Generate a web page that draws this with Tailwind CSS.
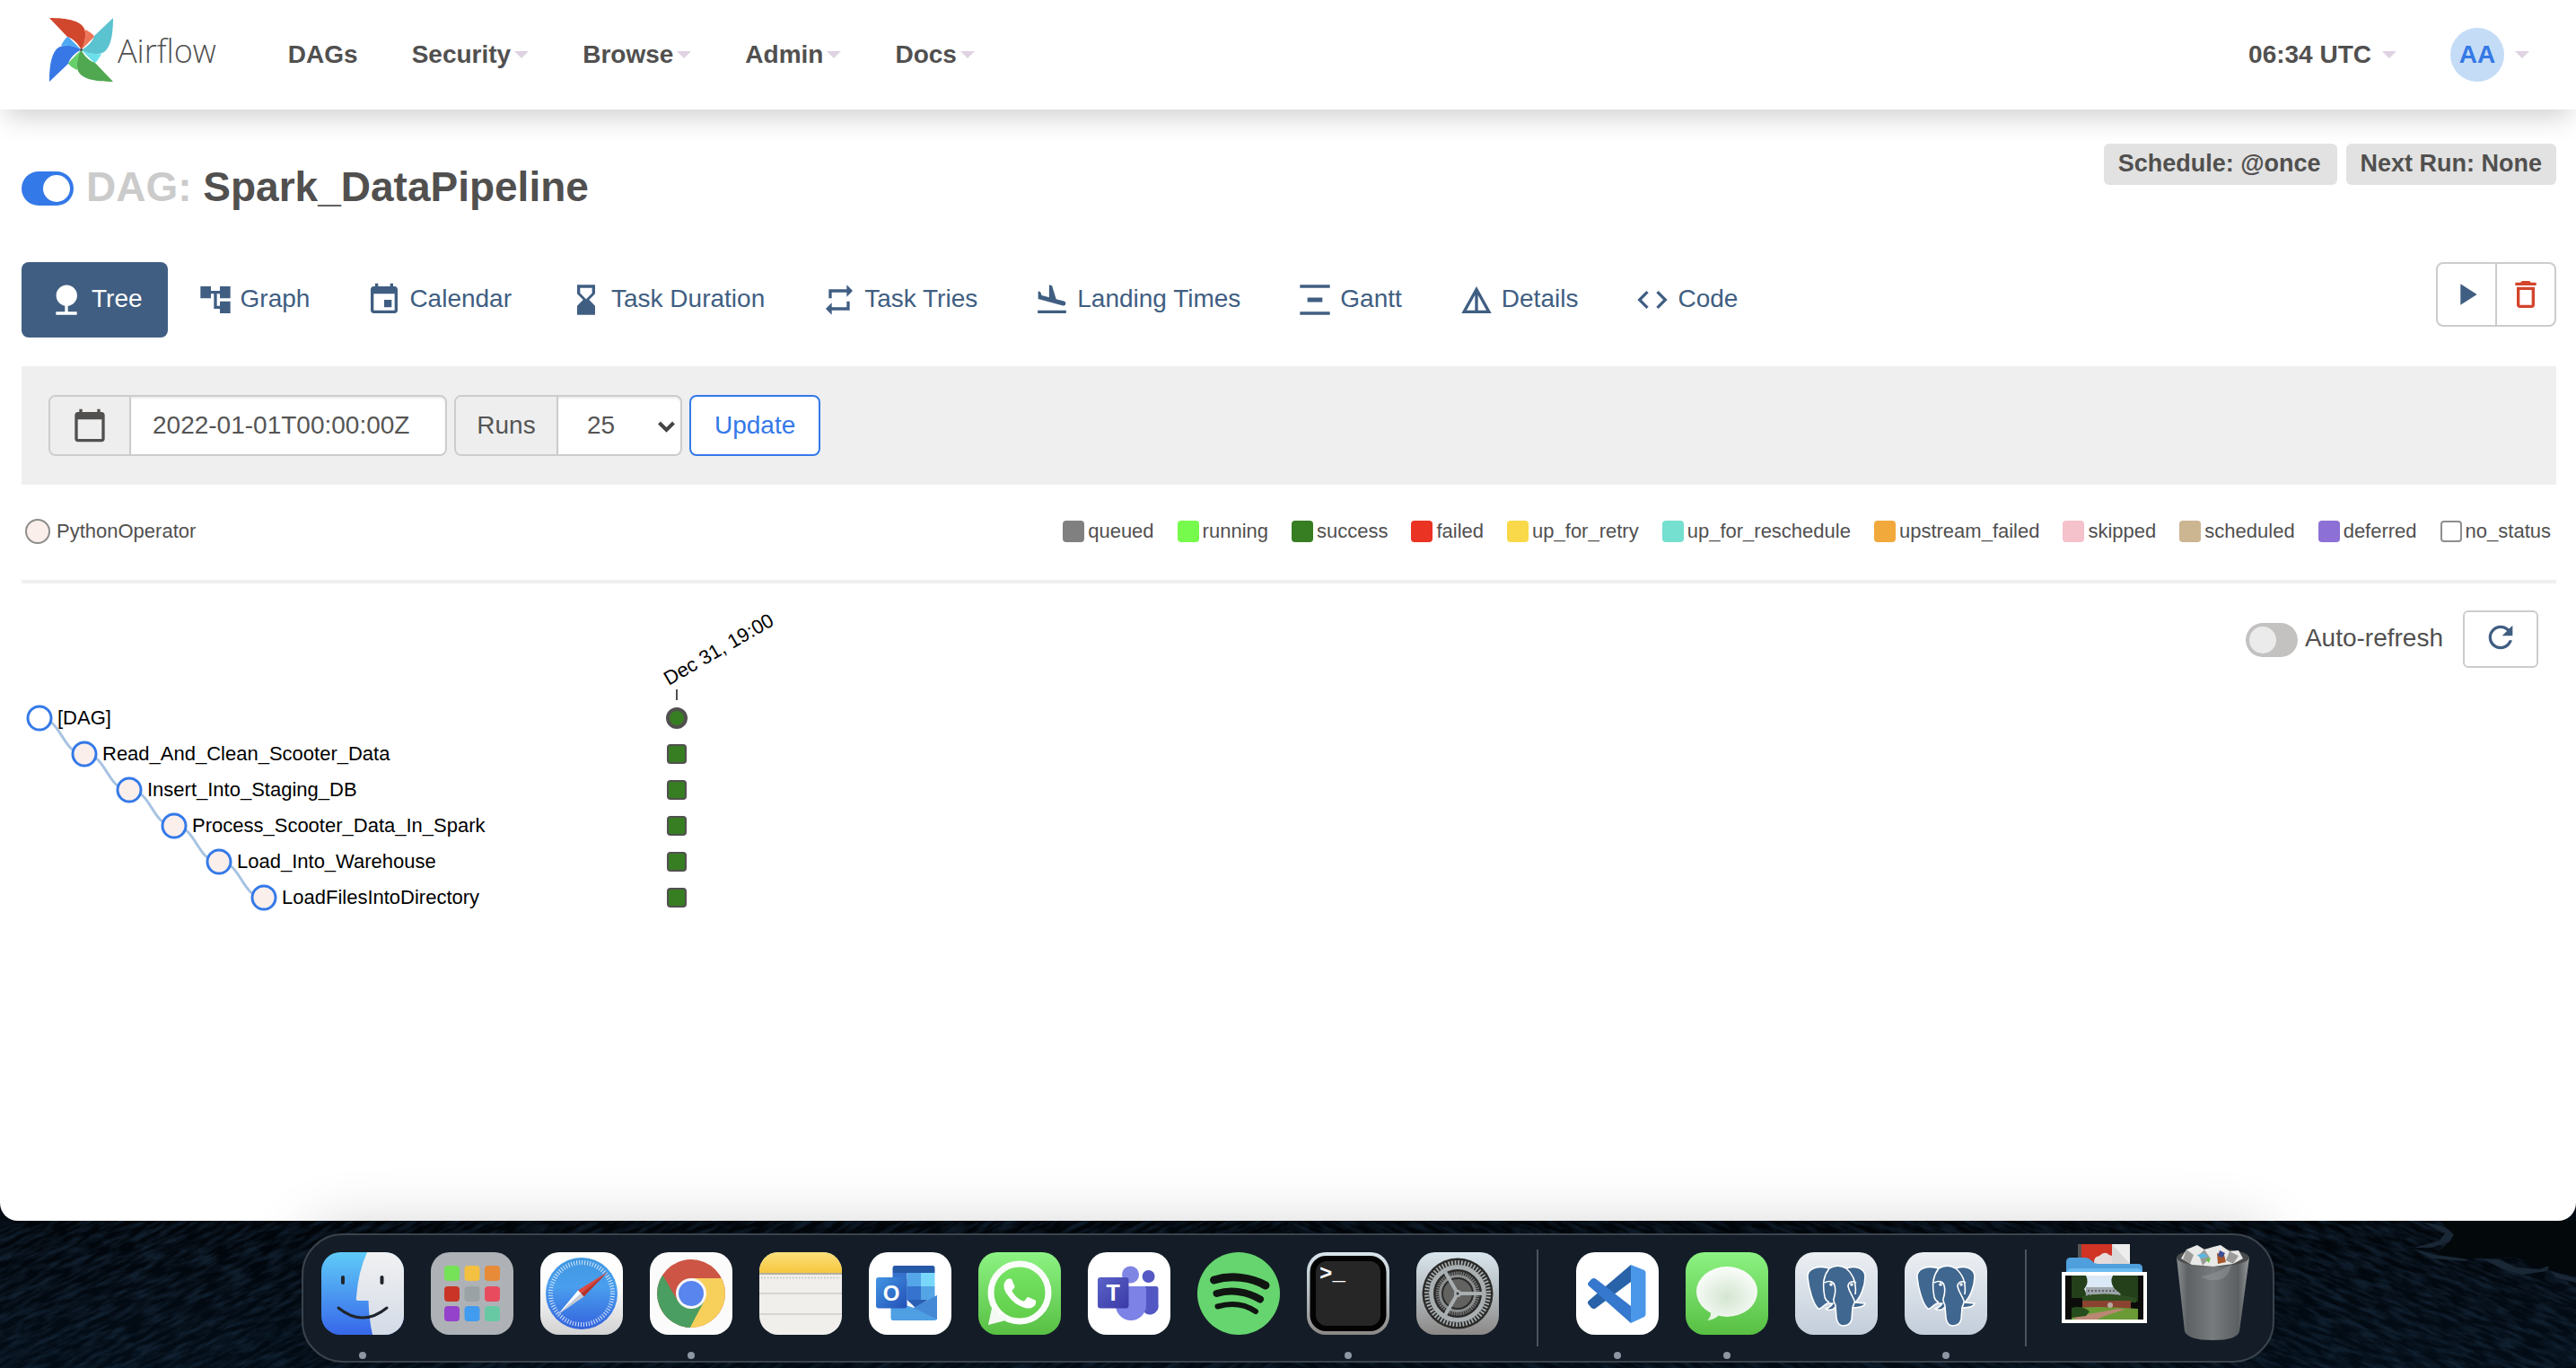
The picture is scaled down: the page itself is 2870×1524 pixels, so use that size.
<!DOCTYPE html>
<html lang="en">
<head>
<meta charset="utf-8">
<meta name="viewport" content="width=device-width, initial-scale=1">
<title>Spark_DataPipeline - Tree - Airflow</title>
<script src="https://cdn.jsdelivr.net/npm/@tailwindcss/browser@4"></script>
</head>
<body class="flex min-h-screen flex-col bg-[#050c14] font-['Liberation_Sans',Arial,sans-serif] text-[28px] leading-8 text-[#51504f]">

<svg class="absolute size-0" aria-hidden="true">
  <defs>
    <symbol id="caret" viewBox="0 0 16 8"><path d="M0 0h16l-8 8z" fill="#dfd3e2"/></symbol>
    <linearGradient id="silver" x1="0" y1="0" x2="0" y2="1"><stop offset="0" stop-color="#d9e6ed"/><stop offset=".5" stop-color="#b4bbbf"/><stop offset="1" stop-color="#8b8886"/></linearGradient>
    <linearGradient id="paper" x1="0" y1="0" x2="0" y2="1"><stop offset="0" stop-color="#fff"/><stop offset=".4" stop-color="#fdfdfd"/><stop offset="1" stop-color="#d2d2d2"/></linearGradient>
    <linearGradient id="finder" x1="0" y1="0" x2="0" y2="1"><stop offset="0" stop-color="#5fcbf8"/><stop offset="1" stop-color="#3767ea"/></linearGradient>
    <linearGradient id="face" x1="0" y1="0" x2="0" y2="1"><stop offset="0" stop-color="#f1f1f2"/><stop offset="1" stop-color="#d3dbe7"/></linearGradient>
    <linearGradient id="compass" x1="0" y1="0" x2="0" y2="1"><stop offset="0" stop-color="#3f97e0"/><stop offset=".4" stop-color="#4a9fee"/><stop offset="1" stop-color="#3462dd"/></linearGradient>
    <linearGradient id="notes" x1="0" y1="0" x2="0" y2="1"><stop offset="0" stop-color="#fbe07a"/><stop offset="1" stop-color="#f7c53c"/></linearGradient>
    <linearGradient id="green" x1="0" y1="0" x2="0" y2="1"><stop offset="0" stop-color="#8cf383"/><stop offset="1" stop-color="#58bf43"/></linearGradient>
    <linearGradient id="outlook" x1="0" y1="0" x2="1" y2="1"><stop offset="0" stop-color="#4295e2"/><stop offset="1" stop-color="#2350b8"/></linearGradient>
    <linearGradient id="teams" x1="0" y1="0" x2="1" y2="1"><stop offset="0" stop-color="#5a62c8"/><stop offset="1" stop-color="#3b3aa6"/></linearGradient>
    <radialGradient id="bubble" cx=".5" cy=".6" r=".6"><stop offset="0" stop-color="#d3e6d0"/><stop offset="1" stop-color="#fbfdfb"/></radialGradient>
    <linearGradient id="slate" x1="0" y1="0" x2="0" y2="1"><stop offset="0" stop-color="#eceff3"/><stop offset="1" stop-color="#c3cedb"/></linearGradient>
    <linearGradient id="bin" x1="0" y1="0" x2="1" y2="0"><stop offset="0" stop-color="#8b8e90"/><stop offset=".15" stop-color="#5f6264"/><stop offset=".5" stop-color="#787b7d"/><stop offset=".85" stop-color="#5c5f61"/><stop offset="1" stop-color="#96999b"/></linearGradient>
    <symbol id="elephant" viewBox="0 0 92 92">
      <rect width="92" height="92" rx="21" fill="url(#slate)"/>
      <g fill="#40678f" stroke="#fff" stroke-width="1.6" stroke-linejoin="round">
        <path d="M14 28C13 18 26 14 38 18C45 14 52 15 57 18C66 14 78 18 78 27C78 38 73 50 67 56L78 57C77 61 70 62 64 62L63 75Q61 82 53 82Q47 81 46 73L45 61C42 65 37 65 34 63C38 62 40 60 42 57L36 57C33 58 28 64 26 63C20 58 15 40 14 28Z"/>
        <path fill="none" d="M38 18C32 26 30 34 33 50C34 54 36 55 38 56M33 34C38 31 43 33 44 37C46 44 44 48 43 52C42 56 46 58 45 61M57 18C64 24 69 32 67 47M68 34C63 31 59 34 59 38C60 44 64 48 66 54C67 56 65 58 64 62"/>
        <circle cx="40" cy="36" r="1" /><circle cx="63" cy="36" r="1"/>
      </g>
    </symbol>
  </defs>
</svg>

<div class="flex flex-1 flex-col rounded-b-[20px] bg-white">
  <nav class="flex h-[122px] items-center justify-between pr-[52px] pl-[55px] font-bold shadow-[0_14px_28px_-6px_rgba(0,0,0,0.19)]">
    <div class="flex items-center">
      <a href="#" class="mr-[50px] flex items-end gap-[5px] pb-[11px]" aria-label="Airflow home">
        <svg class="h-[71px] w-[71px]" viewBox="0 0 71 71">
          <g><path fill="#d1472e" d="M0 0C20 0 39 3 40 16Q41 27 35.500 35.500C33 29 25 22 20 21Z"/><path fill="#ee7658" d="M40 13C46 16 50 19 50 21L35.500 35.500Q41 27 40 13Z"/></g>
          <g transform="rotate(90 35.500 35.500)"><path fill="#5bc2cf" d="M0 0C20 0 39 3 40 16Q41 27 35.500 35.500C33 29 25 22 20 21Z"/><path fill="#6ce0ea" d="M40 13C46 16 50 19 50 21L35.500 35.500Q41 27 40 13Z"/></g>
          <g transform="rotate(180 35.500 35.500)"><path fill="#50a850" d="M0 0C20 0 39 3 40 16Q41 27 35.500 35.500C33 29 25 22 20 21Z"/><path fill="#66cf6a" d="M40 13C46 16 50 19 50 21L35.500 35.500Q41 27 40 13Z"/></g>
          <g transform="rotate(270 35.500 35.500)"><path fill="#3878e6" d="M0 0C20 0 39 3 40 16Q41 27 35.500 35.500C33 29 25 22 20 21Z"/><path fill="#4ea8f3" d="M40 13C46 16 50 19 50 21L35.500 35.500Q41 27 40 13Z"/></g>
          <circle cx="35.500" cy="35.500" r="1.500" fill="#51504f"/>
        </svg>
        <span class="pb-[14px] font-['Open_Sans','Noto_Sans',sans-serif] text-[36px] leading-[40px] font-light">Airflow</span>
      </a>
      <div class="flex items-center">
        <a href="#" class="px-[30px]">DAGs</a>
        <a href="#" class="flex items-center gap-1 px-[30px]">Security<svg class="h-2 w-4"><use href="#caret"/></svg></a>
        <a href="#" class="flex items-center gap-1 px-[30px]">Browse<svg class="h-2 w-4"><use href="#caret"/></svg></a>
        <a href="#" class="flex items-center gap-1 px-[30px]">Admin<svg class="h-2 w-4"><use href="#caret"/></svg></a>
        <a href="#" class="flex items-center gap-1 px-[30px]">Docs<svg class="h-2 w-4"><use href="#caret"/></svg></a>
      </div>
    </div>
    <div class="flex items-center gap-[60px]">
      <a href="#" class="flex items-center gap-3">06:34 UTC<svg class="h-2 w-4"><use href="#caret"/></svg></a>
      <a href="#" class="flex items-center gap-3"><span class="flex size-[60px] items-center justify-center rounded-full bg-[#c5dcf7] text-[#3478e5]">AA</span><svg class="h-2 w-4"><use href="#caret"/></svg></a>
    </div>
  </nav>

  <main class="flex flex-col pr-[22px] pl-6">
    <header class="flex items-start justify-between pt-[38px]">
      <div class="flex items-center gap-[14px] pt-[22px]">
        <input type="checkbox" checked aria-label="Pause or unpause DAG" class="mt-1 h-[38px] w-[58px] appearance-none rounded-full bg-[#3479e8] p-1 before:block before:size-[30px] before:rounded-full before:bg-white checked:before:ml-auto">
        <h1 class="text-[46px] leading-[52px] font-bold"><span class="text-[#cbcbcb]">DAG:</span> Spark_DataPipeline</h1>
      </div>
      <div class="flex gap-[10px] text-[27px] leading-[44px] font-bold">
        <span class="rounded-md bg-[#e2e2e2] pr-[18px] pb-[2px] pl-4">Schedule: @once</span>
        <span class="rounded-md bg-[#e2e2e2] px-4 pb-[2px]">Next Run: None</span>
      </div>
    </header>

    <div class="mt-[58px] flex items-start justify-between">
      <div class="flex gap-[3px] text-[#405e82]">
        <a href="#" class="flex h-[84px] items-center gap-2 rounded-lg bg-[#405e82] pr-7 pl-[30px] text-white"><svg class="size-10 fill-current" viewBox="0 0 24 24"><path d="M13 16.120c3.470-.41 6.170-3.360 6.170-6.950 0-3.870-3.130-7-7-7s-7 3.130-7 7c0 3.470 2.520 6.340 5.830 6.890V20H5v2h14v-2h-6v-3.880z"/></svg><span class="pb-[2px]">Tree</span></a>
        <a href="#" class="flex h-[84px] items-center gap-2 px-[30px]"><svg class="size-10 fill-current" viewBox="0 0 24 24"><path d="M22 11V3h-7v3H9V3H2v8h7V8h2v10h4v3h7v-8h-7v3h-2V8h2v3z"/></svg><span class="pb-[2px]">Graph</span></a>
        <a href="#" class="flex h-[84px] items-center gap-2 px-[30px]"><svg class="size-10 fill-current" viewBox="0 0 24 24"><path d="M17 12h-5v5h5v-5zM16 1v2H8V1H6v2H5c-1.110 0-1.990.9-1.990 2L3 19c0 1.100.89 2 2 2h14c1.100 0 2-.9 2-2V5c0-1.100-.9-2-2-2h-1V1h-2zm3 18H5V8h14v11z"/></svg><span class="pb-[2px]">Calendar</span></a>
        <a href="#" class="flex h-[84px] items-center gap-2 px-[30px]"><svg class="size-10 fill-current" viewBox="0 0 24 24"><path d="M18 22l-.01-6L14 12l3.990-4.010L18 2H6v6l4 4-4 3.990V22h12zM8 7.500V4h8v3.500l-4 4-4-4z"/></svg><span class="pb-[2px]">Task Duration</span></a>
        <a href="#" class="flex h-[84px] items-center gap-2 px-[30px]"><svg class="size-10 fill-current" viewBox="0 0 24 24"><path d="M7 7h10v3l4-4-4-4v3H5v6h2V7zm10 10H7v-3l-4 4 4 4v-3h12v-6h-2v4z"/></svg><span class="pb-[2px]">Task Tries</span></a>
        <a href="#" class="flex h-[84px] items-center gap-2 px-[30px]"><svg class="size-10 fill-current" viewBox="0 0 24 24"><path d="M2.500 19h19v2h-19v-2zm16.840-3.150c.8.21 1.620-.26 1.840-1.060.21-.8-.26-1.620-1.060-1.840l-5.310-1.420-2.760-9.020L10.120 2v8.280L5.150 8.950l-.93-2.320-1.450-.39v5.170l16.570 4.440z"/></svg><span class="pb-[2px]">Landing Times</span></a>
        <a href="#" class="flex h-[84px] items-center gap-2 px-[30px]"><svg class="size-10 fill-current" viewBox="0 0 24 24"><path d="M22 2v2H2V2h20zM7 10.500v3h10v-3H7zM2 20v2h20v-2H2z"/></svg><span class="pb-[2px]">Gantt</span></a>
        <a href="#" class="flex h-[84px] items-center gap-2 px-[30px]"><svg class="size-10 fill-current" viewBox="0 0 24 24"><path d="M12 3L2 21h20L12 3zm1 5.920L18.600 19H13V8.920zm-2 0V19H5.400L11 8.920z"/></svg><span class="pb-[2px]">Details</span></a>
        <a href="#" class="flex h-[84px] items-center gap-2 px-[30px]"><svg class="size-10 fill-current" viewBox="0 0 24 24"><path d="M9.400 16.600L4.800 12l4.600-4.600L8 6l-6 6 6 6 1.400-1.400zm5.200 0l4.600-4.600-4.600-4.600L16 6l6 6-6 6-1.400-1.400z"/></svg><span class="pb-[2px]">Code</span></a>
      </div>
      <div class="flex h-[72px] divide-x-2 divide-[#ccc] rounded-lg border-2 border-[#ccc]">
        <button class="flex w-[66px] items-center justify-center" aria-label="Trigger DAG"><svg class="size-10 fill-[#405e82]" viewBox="0 0 24 24"><path d="M8 5v14l11-7z"/></svg></button>
        <button class="flex w-[64px] items-center justify-center" aria-label="Delete DAG"><svg class="size-10 fill-[#d3452c]" viewBox="0 0 24 24"><path d="M6 19c0 1.100.9 2 2 2h8c1.100 0 2-.9 2-2V7H6v12zM8 9h8v10H8V9zm7.500-5l-1-1h-5l-1 1H5v2h14V4h-3.500z"/></svg></button>
      </div>
    </div>

    <form class="mt-8 flex gap-2 bg-[#efefef] px-[30px] py-8 text-[#555]">
      <div class="flex h-[68px] rounded-lg border-2 border-[#ccc]">
        <label for="base-date" class="flex w-[90px] items-center justify-center rounded-l-md border-r-2 border-[#ccc] bg-[#eee]" aria-label="Base date"><svg class="size-10 fill-[#51504f]" viewBox="0 0 24 24"><path d="M20 3h-1V1h-2v2H7V1H5v2H4c-1.100 0-2 .9-2 2v16c0 1.100.9 2 2 2h16c1.100 0 2-.9 2-2V5c0-1.100-.9-2-2-2zm0 18H4V8h16v13z"/></svg></label>
        <input id="base-date" type="text" value="2022-01-01T00:00:00Z" class="w-[350px] rounded-r-md bg-white px-6 shadow-[inset_0_2px_2px_rgba(0,0,0,0.075)]">
      </div>
      <div class="flex h-[68px] rounded-lg border-2 border-[#ccc]">
        <label for="num-runs" class="flex w-[114px] items-center justify-center rounded-l-md border-r-2 border-[#ccc] bg-[#eee]">Runs</label>
        <div class="relative flex">
          <select id="num-runs" class="w-[136px] appearance-none rounded-r-md bg-white pl-8 shadow-[inset_0_2px_2px_rgba(0,0,0,0.075)]"><option>5</option><option selected>25</option><option>50</option></select>
          <svg class="pointer-events-none absolute top-[27px] right-[6px] h-[13px] w-[19px]" viewBox="0 0 19 13" fill="none" stroke="#444" stroke-width="4"><path d="M1.500 2l8 8 8-8"/></svg>
        </div>
      </div>
      <button type="button" class="h-[68px] rounded-lg border-2 border-[#3479e8] bg-white px-[26px] text-[#3479e8]">Update</button>
    </form>

    <section class="flex items-center justify-between border-b-4 border-[#efefef] pt-[38px] pr-[6px] pb-10 pl-1 text-[22px] leading-7">
      <div class="flex items-center gap-[7px]"><span class="size-7 rounded-full border-2 border-[#8e8e8c] bg-[#fbefec]"></span><span>PythonOperator</span></div>
      <ul class="flex gap-[26px]">
        <li class="flex items-center gap-1"><span class="size-6 rounded bg-[#808080]"></span><span>queued</span></li>
        <li class="flex items-center gap-1"><span class="size-6 rounded bg-[#76fb4c]"></span><span>running</span></li>
        <li class="flex items-center gap-1"><span class="size-6 rounded bg-[#377e22]"></span><span>success</span></li>
        <li class="flex items-center gap-1"><span class="size-6 rounded bg-[#ea3323]"></span><span>failed</span></li>
        <li class="flex items-center gap-1"><span class="size-6 rounded bg-[#f9d94a]"></span><span>up_for_retry</span></li>
        <li class="flex items-center gap-1"><span class="size-6 rounded bg-[#75dfd0]"></span><span>up_for_reschedule</span></li>
        <li class="flex items-center gap-1"><span class="size-6 rounded bg-[#f2a93b]"></span><span>upstream_failed</span></li>
        <li class="flex items-center gap-1"><span class="size-6 rounded bg-[#f5c1cb]"></span><span>skipped</span></li>
        <li class="flex items-center gap-1"><span class="size-6 rounded bg-[#ccb591]"></span><span>scheduled</span></li>
        <li class="flex items-center gap-1"><span class="size-6 rounded bg-[#8d70d6]"></span><span>deferred</span></li>
        <li class="flex items-center gap-1"><span class="size-6 rounded border-2 border-[#8e8e8c] bg-white"></span><span>no_status</span></li>
      </ul>
    </section>

    <section class="flex items-start justify-between">
      <svg class="h-[400px] w-[900px] text-[22px]" viewBox="0 0 900 400" role="img" aria-label="Task tree">
        <g fill="none" stroke="#a6c3e2" stroke-width="3">
          <path d="M20 150C45 150 45 190 70 190"/><path d="M70 190C95 190 95 230 120 230"/><path d="M120 230C145 230 145 270 170 270"/><path d="M170 270C195 270 195 310 220 310"/><path d="M220 310C245 310 245 350 270 350"/>
        </g>
        <g fill="#fbefec" stroke="#3479e8" stroke-width="3">
          <circle cx="20" cy="150" r="13" fill="#fff"/><circle cx="70" cy="190" r="13"/><circle cx="120" cy="230" r="13"/><circle cx="170" cy="270" r="13"/><circle cx="220" cy="310" r="13"/><circle cx="270" cy="350" r="13"/>
        </g>
        <g fill="#000">
          <text x="40" y="157">[DAG]</text><text x="90" y="197">Read_And_Clean_Scooter_Data</text><text x="140" y="237">Insert_Into_Staging_DB</text><text x="190" y="277">Process_Scooter_Data_In_Spark</text><text x="240" y="317">Load_Into_Warehouse</text><text x="290" y="357">LoadFilesIntoDirectory</text>
          <text transform="translate(721 114) rotate(-30)">Dec 31, 19:00</text>
        </g>
        <path d="M730 118v12" stroke="#51504f" stroke-width="2"/>
        <g fill="#377e22" stroke="#51504f" stroke-width="2">
          <circle cx="730" cy="150" r="10" stroke-width="4"/>
          <rect x="720" y="180" width="20" height="20" rx="3"/><rect x="720" y="220" width="20" height="20" rx="3"/><rect x="720" y="260" width="20" height="20" rx="3"/><rect x="720" y="300" width="20" height="20" rx="3"/><rect x="720" y="340" width="20" height="20" rx="3"/>
        </g>
      </svg>
      <div class="flex items-center gap-[22px] pt-[30px] pr-5">
        <label class="flex items-center gap-2"><input type="checkbox" class="mt-[2px] h-[38px] w-[58px] appearance-none rounded-full bg-[#c4c2c1] p-1 before:block before:size-[30px] before:rounded-full before:bg-[#ebebeb] checked:before:ml-auto"><span class="pb-[2px]">Auto-refresh</span></label>
        <button class="flex h-[64px] w-[84px] items-center justify-center rounded-md border-2 border-[#ccc]" aria-label="Refresh"><svg class="mb-1 size-10 fill-[#405e82]" viewBox="0 0 24 24"><path d="M17.650 6.350C16.200 4.900 14.210 4 12 4c-4.420 0-7.990 3.580-7.990 8s3.570 8 7.990 8c3.730 0 6.840-2.550 7.730-6h-2.080c-.82 2.330-3.040 4-5.650 4-3.310 0-6-2.690-6-6s2.690-6 6-6c1.660 0 3.140.69 4.220 1.780L13 11h7V4l-2.350 2.350z"/></svg></button>
      </div>
    </section>
  </main>
</div>

<footer class="relative flex justify-center bg-linear-to-b from-[#02060b] to-[#030d17] pt-[14px] pb-[6px]">
  <svg class="absolute inset-0 h-full w-full" aria-hidden="true">
    <filter id="ripple" x="0" y="0" width="100%" height="100%" color-interpolation-filters="sRGB"><feTurbulence type="fractalNoise" baseFrequency="0.04 0.2" numOctaves="4" seed="8"/><feColorMatrix values="0 0 0 0 .1  0 0 0 0 .18  0 0 0 0 .26  2.500 0 0 0 -.9"/></filter>
    <svg width="50%" height="100%"><g transform="rotate(-25)"><rect x="-200" y="-100" width="2200" height="1100" filter="url(#ripple)" opacity=".6"/></g></svg>
    <svg x="50%" width="50%" height="100%"><g transform="rotate(22)"><rect x="-200" y="-900" width="2200" height="1300" filter="url(#ripple)" opacity=".6"/></g></svg>
  </svg>
  <svg class="absolute top-0 right-0 h-[80px] w-[190px]" viewBox="0 0 190 80" aria-hidden="true">
    <path fill="#03080a" d="M40 0H190V62L170 56L150 50L120 40L70 42L34 38L54 18Z"/>
    <path fill="#1a2735" d="M20 2Q46 4 54 16L48 24L28 30L10 30L38 22L44 14ZM10 32L34 38L70 43L66 45L30 42ZM86 42L104 43L124 52L150 54L160 50L158 56L130 60L108 54ZM162 56L190 64V69L168 63Z"/>
  </svg>
  <div class="relative flex h-[144px] gap-[30px] rounded-[46px] border-2 border-[#3a434c] bg-[#141d27] pt-[19px] pr-[18px] pl-5 shadow-[0_0_70px_rgba(0,0,0,0.23)]">
    <div class="flex flex-col items-center gap-[19px]">
      <svg class="size-[92px]" viewBox="0 0 92 92"><rect width="92" height="92" rx="21" fill="url(#finder)"/><path fill="url(#face)" d="M51 0H71A21 21 0 0 1 92 21V71A21 21 0 0 1 71 92H57Q53 74 52.500 54H41Q38 54 39 50Q41 22 51 0Z"/><g fill="none" stroke="#20242b" stroke-linecap="round"><path stroke-width="4" d="M24 28v6M67.500 28v6"/><path stroke-width="3" d="M19 62Q46 84 73 62"/></g></svg>
      <span class="size-2 rounded-full bg-[#8d96a3]"></span>
    </div>
    <svg class="size-[92px]" viewBox="0 0 92 92"><rect width="92" height="92" rx="21" fill="#aeb2b6"/><g><rect x="15" y="15" width="17" height="17" rx="4" fill="#75e257"/><rect x="37.500" y="15" width="17" height="17" rx="4" fill="#f4c041"/><rect x="60" y="15" width="17" height="17" rx="4" fill="#e88b38"/><rect x="15" y="38" width="17" height="17" rx="4" fill="#ca3427"/><rect x="37.500" y="38" width="17" height="17" rx="4" fill="#9aa2a5"/><rect x="60" y="38" width="17" height="17" rx="4" fill="#e84b5e"/><rect x="15" y="60" width="17" height="17" rx="4" fill="#9442cb"/><rect x="37.500" y="60" width="17" height="17" rx="4" fill="#419bee"/><rect x="60" y="60" width="17" height="17" rx="4" fill="#67c9a4"/></g></svg>
    <svg class="size-[92px]" viewBox="0 0 92 92"><rect width="92" height="92" rx="21" fill="url(#paper)"/><circle cx="46" cy="46" r="40" fill="url(#compass)"/><circle cx="46" cy="46" r="34.500" fill="none" stroke="#d7e6fa" stroke-width="5" stroke-dasharray="1 2.010"/><path fill="#e2463c" d="M75 22L42 42.500L45.500 46Z"/><path fill="#b93428" d="M75 22L45.500 46L48.500 49.500Z"/><path fill="#fff" d="M19 70L42 42.500L45.500 46Z"/><path fill="#c9ccd2" d="M19 70L45.500 46L48.500 49.500Z"/></svg>
    <div class="flex flex-col items-center gap-[19px]">
      <svg class="size-[92px]" viewBox="0 0 92 92"><rect width="92" height="92" rx="21" fill="#fbfbfb"/><circle cx="46" cy="46" r="38" fill="#cd5545"/><path fill="#f7cf5b" d="M46 29H79.900A38 38 0 0 1 45 84L46 46Z"/><path fill="#4b9e62" d="M14.200 25.500L31.300 54.500L60.700 54.500L45 84A38 38 0 0 1 14.200 25.500Z"/><path fill="#f7cf5b" d="M60.700 54.500L45 84L62 78V50Z"/><circle cx="46" cy="46" r="17" fill="#f7f7f9"/><circle cx="46" cy="46" r="14" fill="#5885ee"/></svg>
      <span class="size-2 rounded-full bg-[#8d96a3]"></span>
    </div>
    <svg class="size-[92px]" viewBox="0 0 92 92"><rect width="92" height="92" rx="21" fill="#f0efec"/><path fill="url(#notes)" d="M0 24V21A21 21 0 0 1 21 0H71A21 21 0 0 1 92 21V24Z"/><path fill="#b3aea2" d="M0 23h92v2H0z"/><path d="M2 28.500h88" stroke="#c9c8c6" stroke-width="2" stroke-dasharray="1.500 2"/><path d="M0 46h92M0 69h92" stroke="#d6d5d3" stroke-width="2"/></svg>
    <svg class="size-[92px]" viewBox="0 0 92 92"><rect width="92" height="92" rx="21" fill="#fff"/><path fill="#2558a5" d="M29 15H71Q73.500 15 73.500 18V23H26.500V18Q26.500 15 29 15Z"/><path fill="#3572cd" d="M26.500 23H42.500V53H26.500z"/><path fill="#54a6e9" d="M42.500 23H58V38H42.500z"/><path fill="#7ad7fc" d="M58 23H73.500V38H58z"/><path fill="#3573cf" d="M42.500 38H58V53H42.500z"/><path fill="#54a5e5" d="M58 38H73.500V53H58z"/><path fill="#2a5fb4" d="M42.500 53H66L52 62Z"/><path fill="#4f9fe3" d="M24.500 58Q24 53 30 55L50 62L76 48V73Q76 76 73 76H27Q24.500 76 24.500 73Z"/><path fill="#4489d6" d="M50 62L76 48V75Z"/><rect x="8" y="28" width="34.500" height="34.500" rx="3" fill="url(#outlook)"/><text x="25.200" y="53.500" text-anchor="middle" font-size="24" font-weight="bold" fill="#fff">O</text></svg>
    <svg class="size-[92px]" viewBox="0 0 92 92"><rect width="92" height="92" rx="21" fill="url(#green)"/><circle cx="46" cy="45" r="32" fill="#62d947" fill-opacity=".4" stroke="#fafdfa" stroke-width="7"/><path fill="#f4faf3" d="M11 81L15.500 60L21 66L22 71L27 70L34 75Z"/><path fill="#fff" transform="translate(10.800 10.600) scale(2.950)" d="M17.472 14.382c-.297-.149-1.758-.867-2.030-.967-.273-.099-.471-.148-.67.15-.197.297-.767.966-.94 1.164-.173.199-.347.223-.644.075-.297-.15-1.255-.463-2.390-1.475-.883-.788-1.480-1.761-1.653-2.059-.173-.297-.018-.458.13-.606.134-.133.298-.347.446-.52.149-.174.198-.298.298-.497.099-.198.05-.371-.025-.52-.075-.149-.669-1.612-.916-2.207-.242-.579-.487-.5-.669-.51-.173-.008-.371-.01-.57-.01-.198 0-.52.074-.792.372-.272.297-1.040 1.016-1.040 2.479 0 1.462 1.065 2.875 1.213 3.074.149.198 2.096 3.200 5.077 4.487.709.306 1.262.489 1.694.625.712.227 1.360.195 1.871.118.571-.085 1.758-.719 2.006-1.413.248-.694.248-1.289.173-1.413-.074-.124-.272-.198-.57-.347"/></svg>
    <svg class="size-[92px]" viewBox="0 0 92 92"><rect width="92" height="92" rx="21" fill="#fff"/><circle cx="67.600" cy="27" r="7" fill="#5459c4"/><path fill="#5257c3" d="M55 38H76Q78.500 38 78.500 41V58A9 9 0 0 1 60 62Z"/><circle cx="47.500" cy="25" r="9.500" fill="#7f85e3"/><path fill="#7d82e6" d="M31 38H62Q65 38 65 41V59A17 17 0 0 1 31 59Z"/><rect x="11" y="28" width="34.500" height="34.500" rx="3" fill="url(#teams)"/><text x="28.200" y="54" text-anchor="middle" font-size="25" font-weight="bold" fill="#fff">T</text></svg>
    <svg class="size-[92px]" viewBox="0 0 92 92"><circle cx="46" cy="46" r="46" fill="#66d56f"/><g fill="none" stroke="#101512" stroke-linecap="round"><path stroke-width="9" d="M18.500 31C38 25 60 28 76 37"/><path stroke-width="8" d="M21.500 46C38 41 56 44 70 52.500"/><path stroke-width="6" d="M22.500 60.500C38 56 53 58 65 66"/></g></svg>
    <div class="flex flex-col items-center gap-[19px]">
      <svg class="size-[92px]" viewBox="0 0 92 92"><rect width="92" height="92" rx="21" fill="url(#silver)"/><rect x="3.500" y="4" width="85" height="84" rx="18" fill="#030303"/><rect x="10" y="10" width="72" height="72" rx="12" fill="#262626"/><text x="14" y="31" font-size="24" font-weight="bold" fill="#fff" font-family="Liberation Mono, monospace">&gt;_</text></svg>
      <span class="size-2 rounded-full bg-[#8d96a3]"></span>
    </div>
    <svg class="size-[92px]" viewBox="0 0 92 92"><rect width="92" height="92" rx="21" fill="url(#silver)"/><circle cx="46" cy="46" r="39.500" fill="#2b2b2a"/><g fill="none" stroke="#a9afb1"><circle cx="46" cy="46" r="34.500" stroke-width="5" stroke-dasharray="1.800 1.812"/><circle cx="46" cy="46" r="29.500" stroke-width="5"/><circle cx="46" cy="46" r="22.500" stroke="#77797a" stroke-width="4" stroke-dasharray="1.500 1.027"/><circle cx="46" cy="46" r="19.500" stroke="#8b8e8f" stroke-width="3"/><circle cx="46" cy="46" r="16" fill="#626261" stroke="none"/><path stroke-width="4" d="M46 46H75M46 46L31.500 20.900M46 46L31.500 71.100"/></g><circle cx="46" cy="46" r="4" fill="#a9afb1"/><circle cx="46" cy="46" r="1.500" fill="#333"/></svg>
    <span class="mx-3 mt-[-3px] h-[108px] w-[2px] bg-[#4b535c]"></span>
    <div class="flex flex-col items-center gap-[19px]">
      <svg class="size-[92px]" viewBox="0 0 92 92"><rect width="92" height="92" rx="21" fill="#fff"/><path fill="#2862a8" d="M61 14V33L23 61.500Q20 64.500 17 62L14 58.500Q12 56 14 54Z"/><path fill="#3578cd" d="M14 37.500Q12 35 14 33.500L17 30Q20 28 23 30.500L61 60V79Z"/><path fill="#4a97e9" d="M61 14L76 20Q77.500 21 77.500 23V69Q77.500 71 76 72L61 79Z"/></svg>
      <span class="size-2 rounded-full bg-[#8d96a3]"></span>
    </div>
    <div class="flex flex-col items-center gap-[19px]">
      <svg class="size-[92px]" viewBox="0 0 92 92"><rect width="92" height="92" rx="21" fill="url(#green)"/><ellipse cx="46" cy="44" rx="34" ry="28" fill="url(#bubble)"/><path fill="#e9f5e7" d="M28 65Q29 72 24 76Q33 75 37 70Z"/></svg>
      <span class="size-2 rounded-full bg-[#8d96a3]"></span>
    </div>
    <svg class="size-[92px]"><use href="#elephant"/></svg>
    <div class="flex flex-col items-center gap-[19px]">
      <svg class="size-[92px]"><use href="#elephant"/></svg>
      <span class="size-2 rounded-full bg-[#8d96a3]"></span>
    </div>
    <span class="mx-3 mt-[-3px] h-[108px] w-[2px] bg-[#4b535c]"></span>
    <svg class="mt-[-11px] h-[106px] w-[92px] overflow-visible" viewBox="0 0 92 106">
      <path fill="#555" d="M15 2h4v30h-4z"/><path fill="#d13324" d="M19 2h34v30H19z"/><path fill="#ededed" d="M53 2h20v30H53z"/><path fill="#d8d8d8" d="M53 2L73 24H53z"/><path fill="#e6dada" d="M33 24Q32 16 39 15Q45 9 50 14L53 15V24z"/>
      <path fill="#4f9fdc" d="M2 40V22Q2 17 7 17H23Q27 17 30 20Q33 24 38 24H82Q87 24 87 29V40Z"/><path fill="#6cbcf0" d="M2 36Q2 29 8 29H81Q87 29 87 36V40H2Z"/>
      <path fill="#fff" d="M-3 33H92V90H-3z"/><path fill="#0c0d0a" d="M1 37H88V86H1z"/><path fill="#dbe8f5" d="M8 37H82V60H8z"/><path fill="#9fa6aa" d="M24 50H64V66H24z"/><path d="M26 54h38M26 59h38" stroke="#5a646b" stroke-width="2" stroke-dasharray="2 2"/><path fill="#23401a" d="M8 37H24Q28 45 22 52Q26 58 22 62H8zM54 37H82V66H66Q64 56 56 52Q50 44 54 37z"/><path fill="#2d4e20" d="M20 60Q46 54 80 62V67H20z"/><path fill="#8a4331" d="M20 65H74V75H20z"/><path fill="#6a9a35" d="M8 74Q30 70 82 74V86H8z"/><path fill="#b98773" d="M8 83Q40 78 60 74L68 75Q48 80 36 86H14z"/><path fill="#264d1c" d="M8 73Q20 70 28 77L24 82L8 84z"/><circle cx="51" cy="70" r="3" fill="#b9aaa0"/>
    </svg>
    <svg class="mt-[-11px] h-[110px] w-[92px]" viewBox="0 0 92 110">
      <path fill="url(#bin)" d="M3 17L12 99Q15 109 43.500 109Q71 109 73 99L84 17Z"/><ellipse cx="43.500" cy="17" rx="40.500" ry="10" fill="#4a4c4d"/>
      <path fill="#e9e9e8" d="M8 18L14 8L26 3L34 8L44 5L52 3L62 10L72 9L77 18L66 24L44 27L20 25Z"/><path fill="#9b9b99" d="M14 8L22 14L18 24L10 19zM34 8L40 17L32 26L28 14zM62 10L58 20L66 24L72 15z"/><path fill="#5cb7e0" d="M26 14l8-2 4 4-8 2z"/><path fill="#6cc04a" d="M35 19l6-2-2 6z"/><path fill="#a7562c" d="M48 12l8 2 2 8-9 2z"/><path fill="#3b4f94" d="M51 9l6 3-3 5-5-2z"/>
      <path fill="#a4a7a9" fill-opacity=".35" d="M30 38Q50 34 64 24Q62 40 48 42Q36 43 30 38Z"/>
    </svg>
  </div>
</footer>
</body>
</html>
